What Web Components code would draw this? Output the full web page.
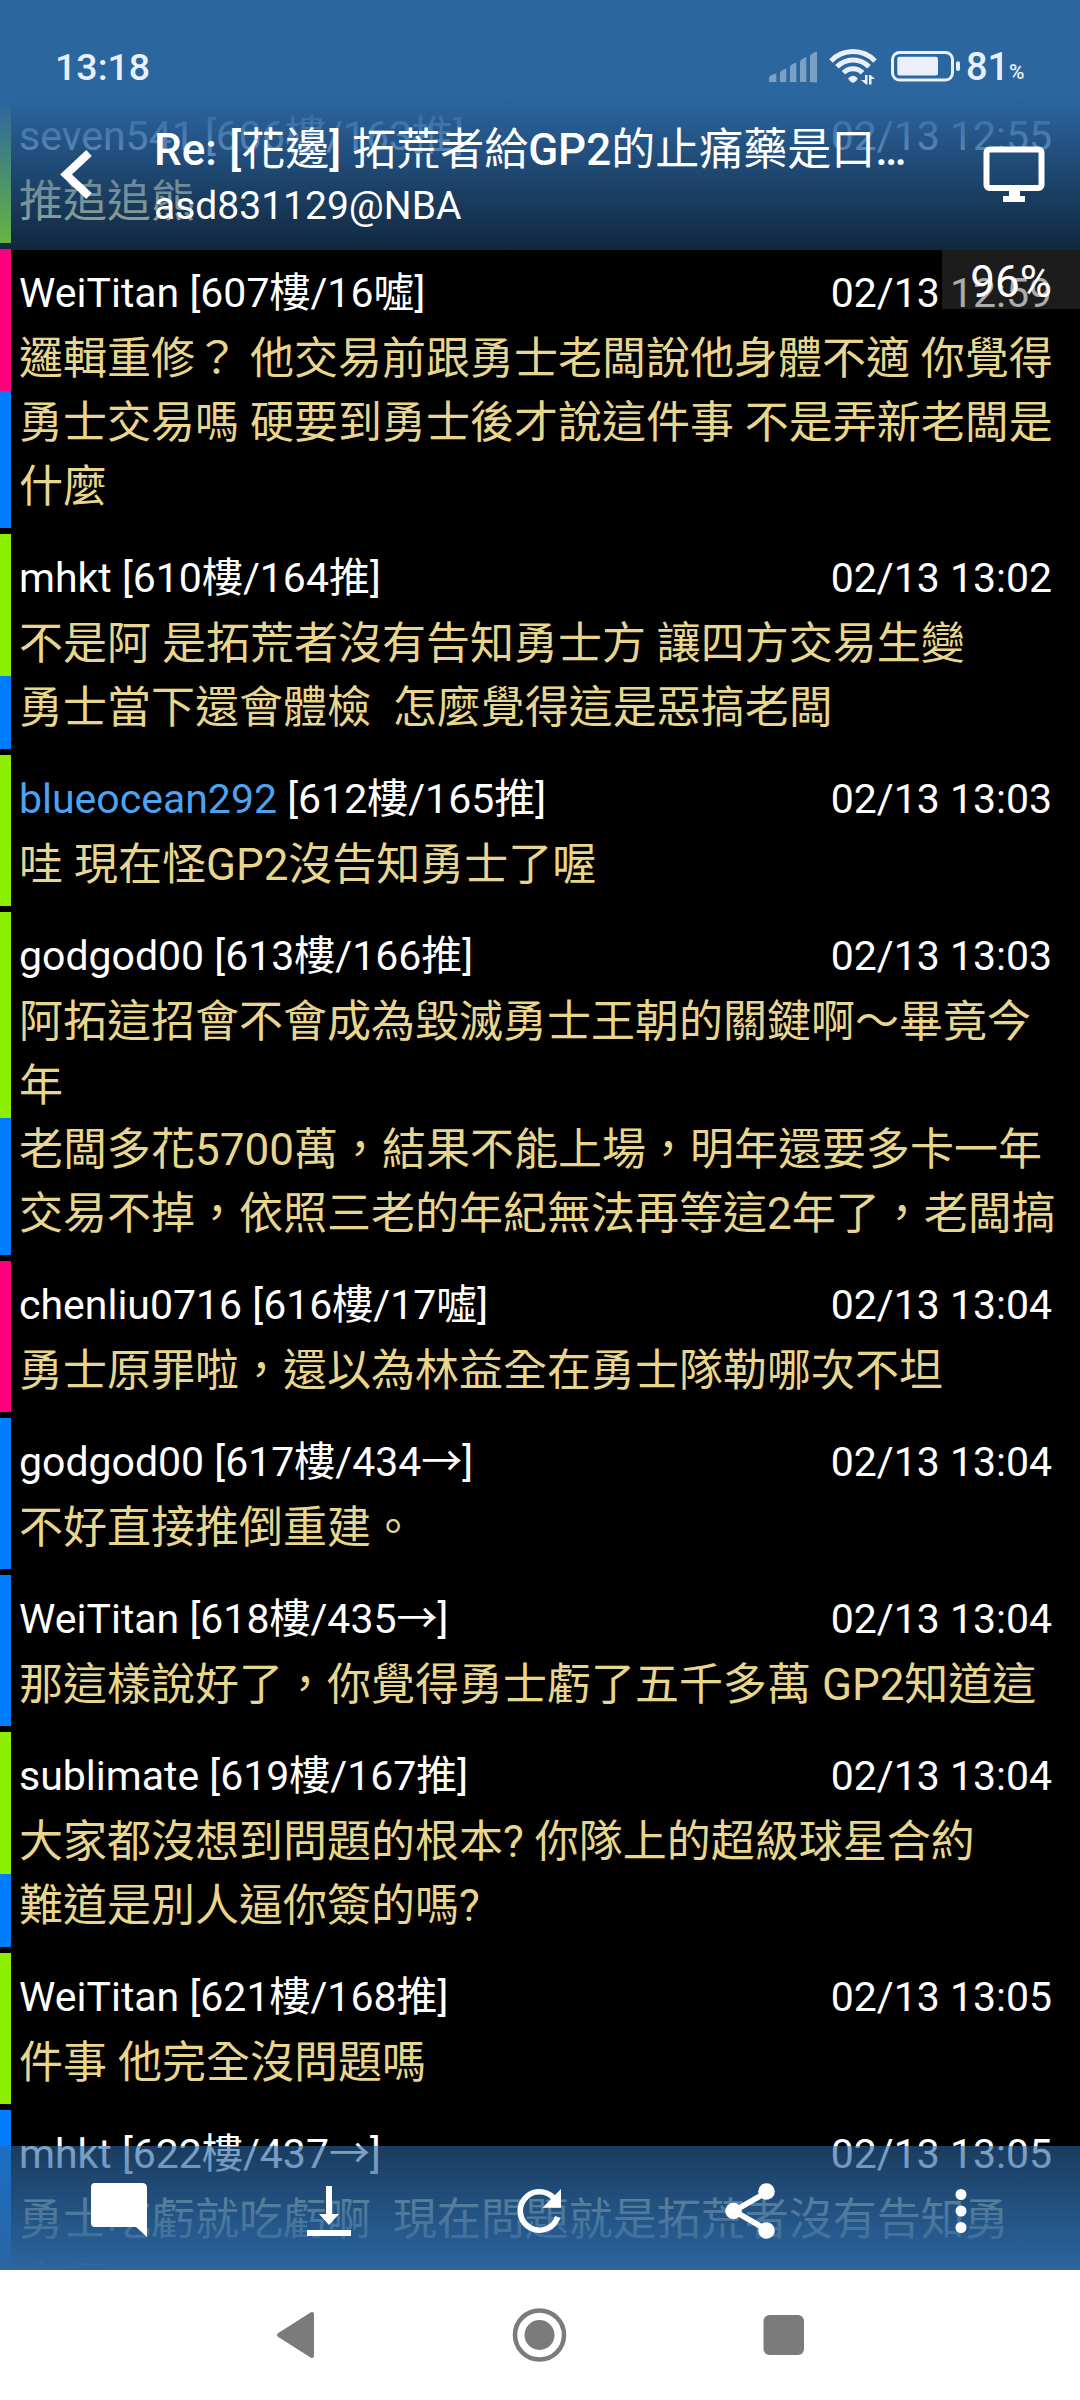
<!DOCTYPE html>
<html lang="zh-Hant">
<head>
<meta charset="utf-8">
<title>PTT</title>
<style>
html,body{margin:0;padding:0;background:#000}
body{width:1080px;height:2400px;overflow:hidden;font-family:Roboto,"Noto Sans CJK TC",sans-serif}
</style>
</head>
<body>
<ptt-app></ptt-app>
<script>
class PttComment extends HTMLElement{
  connectedCallback(){
    const seg=(this.getAttribute('segs')||'').split(' ').map(s=>s.split(':'));
    const lines=(this.getAttribute('text')||'').split('|');
    this.attachShadow({mode:'open'}).innerHTML=`<style>
      :host{display:flex;align-items:stretch;margin-bottom:6px;flex:none}
      .bar{width:11px;display:flex;flex-direction:column;flex:none}
      .bar i:last-child{flex:1}
      .main{flex:1;padding:0 0 9px 8px;min-width:0}
      .head{display:flex;justify-content:space-between;height:78px;box-sizing:border-box;padding:21px 28px 0 0;font-size:41px;line-height:47px;color:#fff;white-space:pre}
      .name{color:var(--name,#fff)}
      .line{height:64px;line-height:64px;font-size:44px;color:#e7d68c;white-space:pre}
    </style>
    <div class="bar">${seg.map(([c,h])=>`<i style="background:${{r:'#ff007d',g:'#8eee00',b:'#007dff'}[c]};height:${h}px"></i>`).join('')}</div>
    <div class="main">
      <div class="head"><span><span class="name">${this.getAttribute('user')}</span> [${this.getAttribute('floor')}]</span><span class="date">${this.getAttribute('date')}</span></div>
      ${lines.map(l=>`<div class="line">${l}</div>`).join('')}
    </div>`;
    if(this.hasAttribute('friend'))this.style.setProperty('--name','#4ba3f2');
  }
}
customElements.define('ptt-comment',PttComment);

class StatusBar extends HTMLElement{
  connectedCallback(){
    this.attachShadow({mode:'open'}).innerHTML=`<style>
      :host{display:flex;justify-content:space-between;align-items:flex-start;height:100px;box-sizing:border-box;padding:0 0 0 55px;background:#2b669e;color:#e9f0fb;font-weight:500}
      .t{font-size:37.5px;line-height:44px;padding-top:45px}
      .r{display:flex;width:312px}
      svg{display:block;flex:none}
      .n{font-size:38px;line-height:44px;padding-top:45px;width:43px}
      .p{font-size:21px;line-height:44px;padding-top:50px}
    </style><span class="t">13:18</span><div class="r">
    <svg width="198" height="100" viewBox="768 0 198 100" fill="#e9f0fb">
      <g opacity=".42"><path d="M769 82v-4q0-3 7.300-4.500v8.500zM780 82v-9q0-2.500 6.300-4.500v13.500zM790 82v-15q0-2.500 6.300-4.500v19.500zM800 82v-20q0-2.500 6.300-5v25zM810 82v-25q0-3.500 7-5.500v31z"/></g>
      <g fill="none" stroke="#e9f0fb" stroke-width="5"><path d="M831 61A30.500 30.500 0 0 1 875 61M837 66.800A22 22 0 0 1 869 66.800M843.500 72.800A13 13 0 0 1 862.500 72.800"/></g>
      <path d="M848 78.500q5-5.500 10 0q-1 2.500-5 4.500q-4-2-5-4.500z"/>
      <path d="M865 75h2.500v9.500h-1.500l-5-4.500h4zM869 84.500v-9.500h1.500l4.500 4h-3.500v5.500z"/>
      <rect x="892.500" y="52.500" width="60" height="27.500" rx="7" fill="none" stroke="#e9f0fb" stroke-width="3"/>
      <rect x="897.300" y="56.700" width="40.700" height="18.800" rx="2"/><rect x="956" y="61.300" width="4" height="9.700" rx="2"/>
    </svg><span class="n">81</span><span class="p">%</span></div>`;
  }
}
customElements.define('status-bar',StatusBar);

class TitleBar extends HTMLElement{
  connectedCallback(){
    this.attachShadow({mode:'open'}).innerHTML=`<style>
      :host{display:flex;height:150px;box-sizing:border-box;color:#fff;background:linear-gradient(rgba(43,101,160,1),rgba(43,101,160,.39))}
      .back{width:154px;flex:none}.mid{width:758px;flex:none;padding-top:23px}
      .title{font-size:44px;line-height:54px;white-space:pre;font-weight:400}
      b{font-weight:500}
      .re{margin-right:1.5px}
      .sub{font-size:39px;line-height:54px;padding-top:2px}
      svg{display:block}
    </style>
    <svg class="back" width="154" height="150" viewBox="0 100 154 150"><path d="M89 153L66 174.500L89 196" fill="none" stroke="#fff" stroke-width="8"/></svg>
    <div class="mid"><div class="title"><b class="re">Re: </b><b>[</b>花邊<b>]</b> 拓荒者給<b>GP2</b>的止痛藥是口<b>…</b></div><div class="sub">asd831129@NBA</div></div>
    <svg width="168" height="150" viewBox="912 100 168 150"><rect x="986.500" y="149.500" width="55" height="38.500" rx="3" fill="none" stroke="#fff" stroke-width="6"/><path d="M1009 190h11v6h5v6h-22v-6h6z" fill="#fff"/></svg>`;
  }
}
customElements.define('title-bar',TitleBar);

class ActionBar extends HTMLElement{
  connectedCallback(){
    this.attachShadow({mode:'open'}).innerHTML=`<style>
      :host{display:flex;padding:0 15px;height:124px;box-sizing:border-box;background:linear-gradient(rgba(43,101,160,.6),rgba(43,101,160,1))}
      svg{flex:1;display:block;height:124px;min-width:0}
    </style>
    <svg viewBox="15 2146 210 124"><path d="M95 2183h47q5 0 5 5v49l-11-10h-41q-4 0-4-4v-36q0-4 4-4z" fill="#fff"/></svg>
    <svg viewBox="225 2146 210 124"><path d="M326 2186h6v28h7l-10 11l-10-11h7zM307 2230h44v6h-44z" fill="#fff"/></svg>
    <svg viewBox="435 2146 210 124"><path d="M553.200 2197.500A19.200 19.200 0 1 0 557.700 2217" fill="none" stroke="#fff" stroke-width="5.600"/><path d="M561 2189v18.800h-18.500z" fill="#fff"/></svg>
    <svg viewBox="645 2146 210 124"><path d="M767 2192L734 2211L767 2230" fill="none" stroke="#fff" stroke-width="5.500"/><g fill="#fff"><circle cx="766.500" cy="2191.500" r="8.300"/><circle cx="733.500" cy="2211" r="8.300"/><circle cx="766.500" cy="2230.500" r="8.300"/></g></svg>
    <svg viewBox="855 2146 210 124"><g fill="#fff"><circle cx="961" cy="2194.500" r="5.500"/><circle cx="961" cy="2211" r="5.500"/><circle cx="961" cy="2227.500" r="5.500"/></g></svg>`;
  }
}
customElements.define('action-bar',ActionBar);

class NavBar extends HTMLElement{
  connectedCallback(){
    this.attachShadow({mode:'open'}).innerHTML=`<style>
      :host{display:flex;justify-content:center;height:130px;background:#fff}
      svg{width:244px;height:130px;display:block}
    </style>
    <svg viewBox="174 2270 244 130"><path d="M279 2335L312 2314V2356Z" fill="#7b7b7b" stroke="#7b7b7b" stroke-width="4" stroke-linejoin="round"/></svg>
    <svg viewBox="418 2270 244 130"><circle cx="539.500" cy="2335" r="24.500" fill="none" stroke="#7b7b7b" stroke-width="4.500"/><circle cx="539.500" cy="2335" r="15" fill="#7b7b7b"/></svg>
    <svg viewBox="662 2270 244 130"><rect x="763.500" y="2315" width="40.500" height="40" rx="6" fill="#7b7b7b"/></svg>`;
  }
}
customElements.define('nav-bar',NavBar);

class PttApp extends HTMLElement{
  connectedCallback(){
    this.attachShadow({mode:'open'}).innerHTML=`<style>
      :host{display:flex;flex-direction:column;position:relative;width:1080px;height:2400px;background:#000}
      .list{flex:1;min-height:0;overflow:hidden;padding-top:92px;display:flex;flex-direction:column;box-sizing:border-box}
      .top{position:absolute;top:0;left:0;right:0}
      .pct{position:absolute;top:250px;right:0;width:138px;height:59px;box-sizing:border-box;padding-right:28px;text-align:right;font-size:44px;line-height:64px;color:#fff;background:rgba(64,64,64,.435)}
      action-bar{position:absolute;left:0;right:0;bottom:130px}
    </style>
    <div class="list">
      <ptt-comment user="seven541" floor="606樓/163推" date="02/13 12:55" segs="g:151" text="推追追熊"></ptt-comment>
      <ptt-comment user="WeiTitan" floor="607樓/16噓" date="02/13 12:59" segs="r:142 b:1" text="邏輯重修？ 他交易前跟勇士老闆說他身體不適 你覺得|勇士交易嗎 硬要到勇士後才說這件事 不是弄新老闆是|什麼"></ptt-comment>
      <ptt-comment user="mhkt" floor="610樓/164推" date="02/13 13:02" segs="g:142 b:1" text="不是阿 是拓荒者沒有告知勇士方 讓四方交易生變|勇士當下還會體檢  怎麼覺得這是惡搞老闆"></ptt-comment>
      <ptt-comment friend user="blueocean292" floor="612樓/165推" date="02/13 13:03" segs="g:1" text="哇 現在怪GP2沒告知勇士了喔"></ptt-comment>
      <ptt-comment user="godgod00" floor="613樓/166推" date="02/13 13:03" segs="g:206 b:1" text="阿拓這招會不會成為毀滅勇士王朝的關鍵啊～畢竟今|年|老闆多花5700萬，結果不能上場，明年還要多卡一年|交易不掉，依照三老的年紀無法再等這2年了，老闆搞"></ptt-comment>
      <ptt-comment user="chenliu0716" floor="616樓/17噓" date="02/13 13:04" segs="r:1" text="勇士原罪啦，還以為林益全在勇士隊勒哪次不坦"></ptt-comment>
      <ptt-comment user="godgod00" floor="617樓/434→" date="02/13 13:04" segs="b:1" text="不好直接推倒重建。"></ptt-comment>
      <ptt-comment user="WeiTitan" floor="618樓/435→" date="02/13 13:04" segs="b:1" text="那這樣說好了，你覺得勇士虧了五千多萬 GP2知道這"></ptt-comment>
      <ptt-comment user="sublimate" floor="619樓/167推" date="02/13 13:04" segs="g:142 b:1" text="大家都沒想到問題的根本? 你隊上的超級球星合約|難道是別人逼你簽的嗎?"></ptt-comment>
      <ptt-comment user="WeiTitan" floor="621樓/168推" date="02/13 13:05" segs="g:1" text="件事 他完全沒問題嗎"></ptt-comment>
      <ptt-comment user="mhkt" floor="622樓/437→" date="02/13 13:05" segs="b:1" text="勇士吃虧就吃虧啊  現在問題就是拓荒者沒有告知勇|士啊"></ptt-comment>
    </div>
    <nav-bar></nav-bar>
    <div class="top"><status-bar></status-bar><title-bar></title-bar></div>
    <div class="pct">96%</div>
    <action-bar></action-bar>`;
  }
}
customElements.define('ptt-app',PttApp);
</script>
</body>
</html>
